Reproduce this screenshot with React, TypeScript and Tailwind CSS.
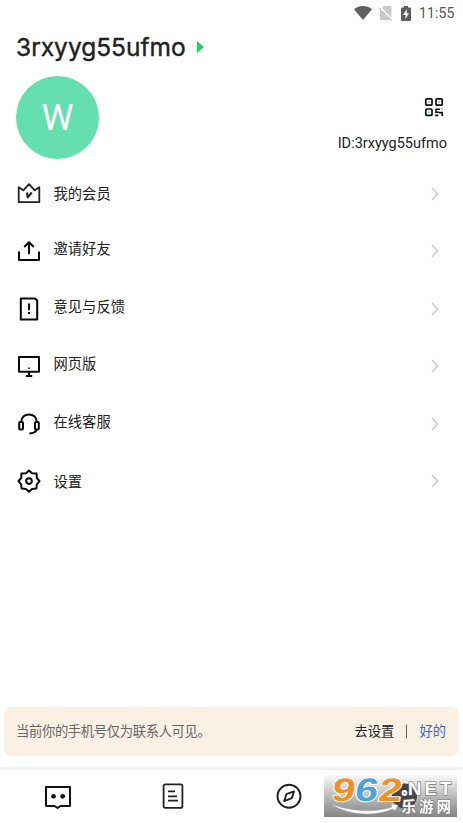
import React from "react";

const cjk = "font-['Noto_Sans_CJK_SC',sans-serif]";
const latin = "font-[Roboto,sans-serif]";

function StatusBar() {
  return (
    <div className="flex h-[26px] items-center justify-end pr-[8px]">
      <svg width="18" height="14" viewBox="0 0 18 14" className="mr-[7px]" fill="#606060">
        <path d="M0 3.2C5-1 13-1 18 3.2L9 14Z" />
      </svg>
      <svg width="14" height="16" viewBox="0 0 14 16" className="mr-[8px]">
        <path d="M5 1H12.5V15H1V5Z" fill="#c9c9c9" />
        <path d="M0 1.5L13.5 15.5" stroke="#fff" strokeWidth="2.4" />
        <path d="M0 2.8L12.5 15.5" stroke="#b5b5b5" strokeWidth="1" />
      </svg>
      <svg width="10" height="15" viewBox="0 0 10 15" className="mr-[8px]">
        <path d="M3 0H7V1.5H9.2L10 2.3V14.2L9.2 15H.8L0 14.2V2.3L.8 1.5H3Z" fill="#5c5c5c" />
        <path d="M5.8 3.3L2 9H4.5V13L8 7.2H5.8Z" fill="#fff" />
      </svg>
      <span className={`${latin} w-[36px] whitespace-nowrap text-[14px] leading-[16px] tracking-[0.1px] text-[#555]`}>11:55</span>
    </div>
  );
}

function Chevron() {
  return (
    <svg width="8" height="14" viewBox="0 0 8 14" fill="none" stroke="#c7c7c7" strokeWidth="1.3">
      <path d="M1 1L6.7 7L1 13" />
    </svg>
  );
}

function QrIcon() {
  return (
    <svg width="20" height="20" viewBox="0 0 20 20" fill="none" stroke="#111" strokeWidth="1.7">
      <rect x="1.8" y="1.8" width="6.2" height="6.4" rx="1" />
      <rect x="12" y="1.8" width="6.2" height="6.4" rx="1" />
      <rect x="1.8" y="12" width="6.2" height="6.4" rx="1" />
      <path d="M16 12.2H12v3h3M11.2 18.4h3M15 15.6H18.2V19" strokeWidth="1.6" />
      <path d="M4.3 5h1.4M14.3 5h1.4M4.3 15.2h1.4M17.3 11.8h1.6" stroke="#25c56b" strokeWidth="1.3" />
    </svg>
  );
}

const items: { label: string; shift: string; icon: React.ReactNode }[] = [
  {
    label: "我的会员",
    shift: "pb-[2px]",
    icon: (
      <g stroke="#222" strokeWidth="1.8">
        <path d="M1.7 5.2L6.3 8.3L12 2.2L17.7 8.3L22.3 5.2V20.2H1.7Z" />
        <path d="M10 10.5L10.7 15.4L14.8 10.5" strokeWidth="2.1" />
      </g>
    ),
  },
  {
    label: "邀请好友",
    shift: "pb-[6px]",
    icon: <path d="M2 12.5V21H22V12.5M12 15.2V3.2M7.2 8L12 3.2L16.8 8" />,
  },
  {
    label: "意见与反馈",
    shift: "pb-[6px]",
    icon: (
      <g>
        <path d="M3.8 1.5H18L20.2 3.5V22.5H3.8Z" />
        <path d="M12 6.5V13.2M12 15V17" />
      </g>
    ),
  },
  {
    label: "网页版",
    shift: "pb-[6px]",
    icon: (
      <g>
        <path d="M2 3H22V17.7H2ZM12 17.7V22M8.8 22H15.2" />
        <path d="M12 13.5V15" strokeWidth="1.6" />
      </g>
    ),
  },
  {
    label: "在线客服",
    shift: "pb-[6px]",
    icon: (
      <g strokeWidth="2">
        <path d="M4.2 10C4.2 -.1 19.8 -.1 19.8 10M19.8 17C19 20.3 16.5 21.4 12.3 21.4" />
        <rect x="2.2" y="10" width="3.8" height="7.4" rx="1" />
        <rect x="18" y="10" width="3.8" height="7.4" rx="1" />
      </g>
    ),
  },
  {
    label: "设置",
    shift: "pb-0",
    icon: (
      <g strokeWidth="2">
        <path d="M12 1.5L15 4.3L19.6 4.6L19.8 9L22.5 12.2L19.8 15.3L19.4 19.4L15 20L12 22.7L9 20L4.6 19.4L4.2 15.3L1.5 12.2L4.2 9L4.4 4.6L9 4.3Z" />
        <circle cx="12" cy="12.1" r="2.8" />
      </g>
    ),
  },
];

function Watermark() {
  return (
    <svg width="133" height="42" viewBox="0 0 133 42" className="overflow-visible">
      <defs>
        <linearGradient id="shade" x1="0" y1="0" x2="0" y2="1">
          <stop offset="0" stopColor="#fafafa" />
          <stop offset=".5" stopColor="#bcbcbc" />
          <stop offset="1" stopColor="#858585" />
        </linearGradient>
      </defs>
      <rect width="133" height="42" fill="url(#shade)" />
      <circle cx="80.5" cy="21" r="12.5" fill="#454545" />
      <path d="M7 29C22 35 47 39 68 32L67 29L74 30L71 36L69 34C47 43 22 39 7 29Z" fill="#fff" stroke="#999" strokeWidth=".4" />
      <g transform="skewX(-9)" fontFamily="'Liberation Sans', sans-serif" fontWeight="700" fontSize="32.5" stroke="#fff" strokeWidth="2" paintOrder="stroke" strokeLinejoin="round">
        <text x="11" y="26" fill="#f58f22" textLength="23" lengthAdjust="spacingAndGlyphs">9</text>
        <text x="34" y="26" fill="#4ba5dc" textLength="23" lengthAdjust="spacingAndGlyphs">6</text>
        <text x="57.5" y="26" fill="#f58f22" textLength="23" lengthAdjust="spacingAndGlyphs">2</text>
      </g>
      <circle cx="80.5" cy="18" r="2" fill="#777" stroke="#fff" strokeWidth="1.8" />
      <g fill="#fff" stroke="#777" strokeWidth="1.2" paintOrder="stroke">
        <text x="84" y="20" fontFamily="'Liberation Sans', sans-serif" fontWeight="700" fontSize="18.5" letterSpacing="3.2">NET</text>
        <text x="77.5" y="37" fontFamily="'Noto Sans CJK SC', sans-serif" fontWeight="700" fontSize="14.5" letterSpacing="3">乐游网</text>
      </g>
    </svg>
  );
}

export default function App() {
  return (
    <div className="flex h-[823px] w-[463px] flex-col overflow-hidden bg-white">
      <StatusBar />
      <div className="flex h-[42px] items-center pl-[16px]">
        <span className="w-[181px] whitespace-nowrap font-[Inter,sans-serif] text-[24.5px] leading-[30px] text-[#222] [-webkit-text-stroke:0.4px_#222]">3rxyyg55ufmo</span>
        <svg width="7" height="12" viewBox="0 0 7 12" fill="#16d45f"><path d="M0 0L7 6L0 12Z" /></svg>
      </div>
      <div className="flex h-[97px] items-start justify-between pl-[16px] pr-[16px] pt-[8px]">
        <div className={`${latin} flex size-[83px] items-center justify-center rounded-full bg-[#66dfb0] text-[36px] text-white`}>W</div>
        <div className="flex flex-col items-end pt-[21px]">
          <div className="pr-[3px]"><QrIcon /></div>
          <span className={`${latin} mt-[18px] whitespace-nowrap text-[14.5px] leading-[18px] text-[#222]`}>ID:3rxyyg55ufmo</span>
        </div>
      </div>
      <div className="flex flex-col">
        {items.map((item) => (
          <div key={item.label} className="flex h-[57.5px] items-center pl-[17px] pr-[24px]">
            <svg width="24" height="24" viewBox="0 0 24 24" fill="none" stroke="#080808" strokeWidth="2" strokeLinejoin="round">{item.icon}</svg>
            <span className={`${cjk} ml-[12.5px] flex-1 text-[14.3px] leading-[20px] text-[#222] ${item.shift}`}>{item.label}</span>
            <Chevron />
          </div>
        ))}
      </div>
      <div className="flex-1" />
      <div className={`${cjk} mx-[4px] mb-[11px] flex h-[49px] items-center rounded-[8px] bg-[#fbf0e4] pb-[1px] pl-[12px] pr-[13px] text-[13.3px]`}>
        <span className="flex-1 whitespace-nowrap tracking-[-0.33px] text-[#666]">当前你的手机号仅为联系人可见。</span>
        <span className="text-[#222]">去设置</span>
        <span className="mx-[12px] h-[13px] w-px bg-[#666]" />
        <span className="text-[#2c6be0]">好的</span>
      </div>
      <div className="flex h-[56px] border-t-[3px] border-[#f1f1f1]">
        <div className="flex w-[115.5px] justify-center pt-[14px]">
          <svg width="28" height="28" viewBox="0 0 28 28" fill="none" stroke="#111" strokeWidth="2" strokeLinejoin="round">
            <path d="M2 3H26V22H16.5L13.5 24L10.5 22H2Z" />
            <circle cx="9.5" cy="12.3" r="2.4" fill="#111" stroke="none" />
            <circle cx="18.7" cy="12.3" r="2.4" fill="#111" stroke="none" />
          </svg>
        </div>
        <div className="flex w-[115.5px] justify-center pt-[12px]">
          <svg width="22" height="28" viewBox="0 0 22 28" fill="none" stroke="#222" strokeWidth="1.8">
            <rect x="1.6" y="2.4" width="18.8" height="23.5" rx="1.7" />
            <path d="M6 9.3H13M6 14.3H15M6 18.6H16" strokeWidth="1.7" />
          </svg>
        </div>
        <div className="flex w-[115.5px] justify-center pt-[12px]">
          <svg width="28" height="28" viewBox="0 0 28 28" fill="none" stroke="#222" strokeWidth="1.9" strokeLinejoin="round">
            <circle cx="14" cy="14.2" r="11.5" />
            <path d="M19 9.4L16.8 16.1L9.2 19.2L11.4 12.2Z" />
          </svg>
        </div>
        <div className="-ml-[22.5px] shrink-0 pt-[5px]"><Watermark /></div>
      </div>
    </div>
  );
}
